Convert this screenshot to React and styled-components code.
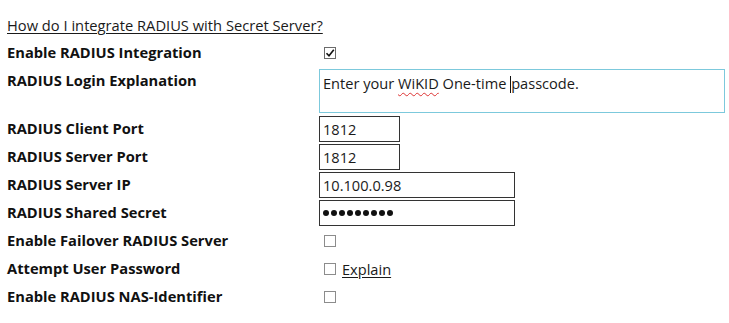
import React from "react";
import styled, { createGlobalStyle } from "styled-components";

const Global = createGlobalStyle`
  html, body { margin: 0; padding: 0; background: #fff; }
  body { font-family: "Open Sans", "Noto Sans", sans-serif; color: #1a1a1a; }
`;

const Page = styled.div`
  padding: 11px 0 0 7px;
  width: 729px;
  box-sizing: border-box;
`;

const HelpLink = styled.a`
  display: block;
  height: 28px;
  line-height: 28px;
  font-size: 14.7px;
  color: #1a1a1a;
  text-decoration: underline;
  text-underline-offset: 2px;
  cursor: pointer;
`;

const Form = styled.div`
  display: grid;
  grid-template-columns: 312px 1fr;
  align-items: start;
`;

const Label = styled.div`
  height: 28px;
  line-height: 27px;
  font-size: 14.7px;
  font-weight: 700;
  color: #111;
  white-space: nowrap;
`;

const Cell = styled.div`
  min-height: 28px;
  display: flex;
  align-items: ${(p) => (p.$top ? "flex-start" : "center")};
  gap: 6px;
  padding-top: ${(p) => (p.$top ? "2px" : "0")};
`;

const Box = styled.span`
  width: 10px;
  height: 10px;
  border: 1px solid ${(p) => (p.$checked ? "#6b6b6b" : "#8c8c8c")};
  background: #fff;
  display: inline-flex;
  align-items: center;
  justify-content: center;
  margin-left: 5px;
  flex: none;
`;

const TextArea = styled.div`
  box-sizing: border-box;
  width: 406px;
  height: 44px;
  border: 1px solid #7cc9dc;
  padding: 3px 3px;
  font-size: 14.6px;
  line-height: 20px;
  color: #1a1a1a;
  margin-bottom: 2px;
`;

const Misspelled = styled.span`
  text-decoration: underline wavy #d33;
  text-decoration-thickness: 1px;
  text-underline-offset: 3px;
`;

const Caret = styled.span`
  display: inline-block;
  width: 1px;
  height: 17px;
  background: #111;
  vertical-align: -4px;
`;

const Field = styled.input`
  box-sizing: border-box;
  width: ${(p) => p.$w}px;
  height: 26px;
  border: 1px solid #333;
  padding: 0 3px;
  margin: 0;
  font-family: "Open Sans", "Noto Sans", sans-serif;
  font-size: 14.6px;
  color: #1a1a1a;
  background: #fff;
  outline: none;
`;

const Dots = styled.div`
  box-sizing: border-box;
  width: 196px;
  height: 26px;
  border: 1px solid #333;
  padding: 0 3px;
  display: flex;
  align-items: center;
  gap: 2px;
`;

const Dot = styled.span`
  width: 6px;
  height: 6px;
  border-radius: 50%;
  background: #111;
`;

const Explain = styled.a`
  font-size: 14.6px;
  color: #1a1a1a;
  text-decoration: underline;
  text-underline-offset: 2px;
  cursor: pointer;
`;

const Check = () => (
  <svg width="10" height="10" viewBox="0 0 10 10">
    <path d="M1.5 5.2 L4 7.8 L8.8 1.8" fill="none" stroke="#111" strokeWidth="1.6" />
  </svg>
);

export default function App() {
  return (
    <>
      <Global />
      <Page>
        <HelpLink>How do I integrate RADIUS with Secret Server?</HelpLink>
        <Form>
          <Label>Enable RADIUS Integration</Label>
          <Cell>
            <Box $checked>
              <Check />
            </Box>
          </Cell>

          <Label>RADIUS Login Explanation</Label>
          <Cell $top>
            <TextArea>
              Enter your <Misspelled>WiKID</Misspelled> One-time <Caret />passcode.
            </TextArea>
          </Cell>

          <Label>RADIUS Client Port</Label>
          <Cell>
            <Field $w={81} defaultValue="1812" readOnly />
          </Cell>

          <Label>RADIUS Server Port</Label>
          <Cell>
            <Field $w={81} defaultValue="1812" readOnly />
          </Cell>

          <Label>RADIUS Server IP</Label>
          <Cell>
            <Field $w={196} defaultValue="10.100.0.98" readOnly />
          </Cell>

          <Label>RADIUS Shared Secret</Label>
          <Cell>
            <Dots>
              {Array.from({ length: 9 }).map((_, i) => (
                <Dot key={i} />
              ))}
            </Dots>
          </Cell>

          <Label>Enable Failover RADIUS Server</Label>
          <Cell>
            <Box />
          </Cell>

          <Label>Attempt User Password</Label>
          <Cell>
            <Box />
            <Explain>Explain</Explain>
          </Cell>

          <Label>Enable RADIUS NAS-Identifier</Label>
          <Cell>
            <Box />
          </Cell>
        </Form>
      </Page>
    </>
  );
}
